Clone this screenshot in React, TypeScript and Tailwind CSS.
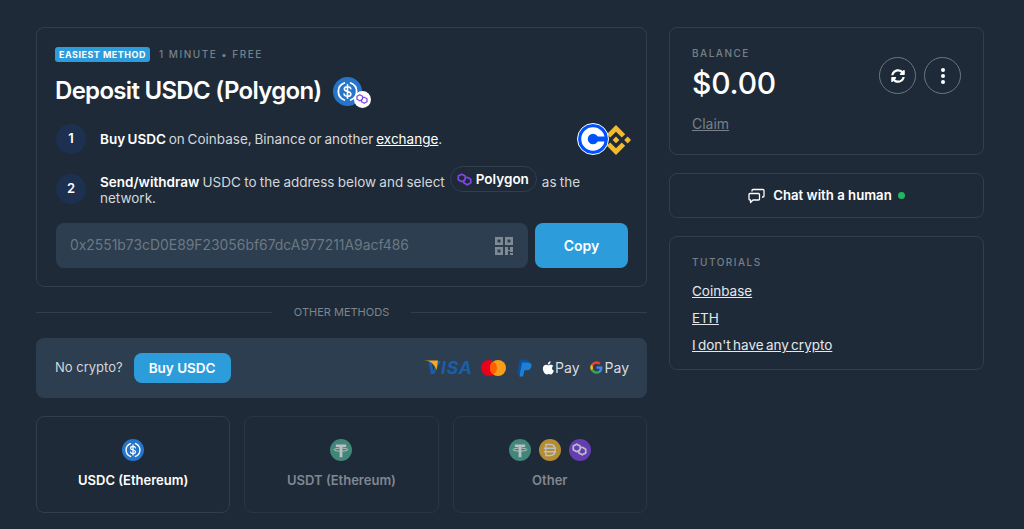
import React from 'react';
import { FaSyncAlt } from 'react-icons/fa';

const UsdcIcon = ({ size }: { size: number }) => (
  <svg width={size} height={size} viewBox="0 0 32 32" className="shrink-0">
    <circle cx="16" cy="16" r="16" fill="#2775ca" />
    <path d="M12.500 6.600a10 10 0 0 0 0 18.800M19.500 6.600a10 10 0 0 1 0 18.800" fill="none" stroke="#fff" strokeWidth="2" strokeLinecap="round" />
    <path d="M19.600 12.800c-.4-1.400-1.700-2.100-3.600-2.100-2 0-3.500 1-3.500 2.600 0 3.600 7.200 1.800 7.200 5.400 0 1.600-1.600 2.600-3.700 2.600-2 0-3.400-.9-3.800-2.400M16 8.600v14.800" fill="none" stroke="#fff" strokeWidth="1.800" strokeLinecap="round" />
  </svg>
);

const PolygonGlyph = ({ size, color }: { size: number; color: string }) => (
  <svg width={size} height={size} viewBox="0 0 24 24" fill="none" stroke={color} strokeWidth="2.600" strokeLinejoin="round" className="shrink-0">
    <path d="M7.500 3.500 13 6.500v6l-5.500 3L2 12.500v-6z" />
    <path d="M13 9.500l3.500-1 5.500 3v6l-5.500 3-5.500-3V14" />
  </svg>
);

const TetherIcon = () => (
  <svg width="22" height="22" viewBox="0 0 32 32" className="shrink-0">
    <circle cx="16" cy="16" r="16" fill="#50af95" />
    <path d="M8.500 8h15v3.500h-5.500v15h-4v-15H8.500z" fill="#fff" />
    <ellipse cx="16" cy="15.500" rx="10" ry="2.200" fill="none" stroke="#fff" strokeWidth="1.400" />
  </svg>
);

const DaiIcon = () => (
  <svg width="22" height="22" viewBox="0 0 32 32" className="shrink-0">
    <circle cx="16" cy="16" r="16" fill="#f4b731" />
    <path d="M10 8h6.500c4.500 0 7 3.400 7 8s-2.500 8-7 8H10zM7 13.500h18M7 18.500h18" fill="none" stroke="#fff" strokeWidth="2" />
  </svg>
);

const Step = ({ n, tight, children }: { n: number; tight?: boolean; children: React.ReactNode }) => (
  <div className="flex h-[30px] items-center gap-[14px]">
    <div className="flex h-[30px] w-[30px] shrink-0 items-center justify-center rounded-full bg-[#1e3050] text-[13px] font-semibold text-white">{n}</div>
    <div className={`text-[13.500px] leading-[16px] text-[#d3d7db] ${tight ? '[word-spacing:-1px]' : '[word-spacing:-0.500px]'}`}>{children}</div>
  </div>
);

const Method = ({ active, label, children }: { active?: boolean; label: string; children: React.ReactNode }) => (
  <div className={`flex h-[97px] flex-1 flex-col items-center justify-center gap-[10px] rounded-lg border ${active ? 'border-[#313e4d]' : 'border-[#283544]'}`}>
    <div className={`flex h-[22px] items-center gap-[8px] ${active ? '' : 'opacity-70'}`}>{children}</div>
    <div className={`text-[13px] font-semibold ${active ? 'text-white' : 'text-[#808790]'}`}>{label}</div>
  </div>
);

export default function App() {
  return (
    <div className="flex h-[529px] gap-[22px] overflow-hidden bg-[#1e2a38] pl-[36px] pt-[27px] font-['Inter',sans-serif] text-white">
      <div className="flex w-[611px] shrink-0 flex-col">
        <div className="flex h-[260px] flex-col rounded-lg border border-[#313e4d] pl-[19px] pr-[18px] pt-[19px]">
          <div className="-ml-[1px] flex items-center gap-[9px]">
            <span className="rounded-[3px] bg-[#2d9cdb] px-[4px] text-[9px] font-bold leading-[15px] tracking-[0.5px] text-white">EASIEST METHOD</span>
            <span className="text-[10px] font-medium tracking-[1.500px] text-[#77808a]">1 MINUTE • FREE</span>
          </div>
          <div className="-ml-[1px] mt-[11px] flex items-center gap-[11px]">
            <h1 className="text-[24px] font-semibold leading-[36px] tracking-[-0.7px]">Deposit USDC (Polygon)</h1>
            <div className="relative h-[29px] w-[29px]">
              <UsdcIcon size={29} />
              <div className="absolute -bottom-[2px] -right-[9px] flex h-[17px] w-[17px] items-center justify-center rounded-full bg-white">
                <PolygonGlyph size={12} color="#8247e5" />
              </div>
            </div>
          </div>
          <div className="relative mt-[15px] flex flex-col gap-[20px]">
            <Step n={1} tight>
              <b className="font-semibold text-white">Buy USDC</b> on Coinbase, Binance or another <span className="text-white underline">exchange</span>.
            </Step>
            <Step n={2}>
              <b className="font-semibold text-white">Send/withdraw</b> USDC to the address below and select
              <span className="-my-[6px] mx-[5px] inline-flex h-[26px] items-center gap-[4px] rounded-full border border-[#313e4d] pl-[6px] pr-[7px] align-baseline font-semibold text-white">
                <PolygonGlyph size={15} color="#8247e5" />
                Polygon
              </span>
              as the<br />network.
            </Step>
            <div className="absolute right-[-3px] -top-[1px] flex items-center">
              <svg width="32" height="32" viewBox="0 0 32 32" className="z-10">
                <circle cx="16" cy="16" r="15.500" fill="#0052ff" stroke="#fff" strokeWidth="1" />
                <circle cx="16" cy="16" r="8.500" fill="none" stroke="#fff" strokeWidth="6.500" />
                <path d="M16 13.500h13v5H16z" fill="#0052ff" />
              </svg>
              <svg width="30" height="30" viewBox="0 0 24 24" fill="#f3ba2f" className="-ml-[8px] mt-[2px]">
                <path d="M16.624 13.920l2.718 2.715-7.353 7.353-7.353-7.352 2.718-2.716 4.635 4.660 4.636-4.660zm4.637-4.637L24 12l-2.715 2.716L18.568 12l2.693-2.717zm-9.272.001l2.716 2.691-2.716 2.718L9.272 12l2.717-2.716zm-9.272-.001L5.409 12l-2.691 2.692L0 12l2.716-2.717zM11.989.012l7.353 7.329-2.717 2.715-4.636-4.636-4.635 4.660-2.718-2.716 7.353-7.352z" />
              </svg>
            </div>
          </div>
          <div className="mt-[19px] flex gap-[7px]">
            <div className="flex h-[45px] w-[472px] items-center justify-between rounded-lg bg-[#2c3e4f] pl-[14px] pr-[15px]">
              <span className="text-[13.900px] text-[#6c7884]">0x2551b73cD0E89F23056bf67dcA977211A9acf486</span>
              <svg width="18" height="18" viewBox="0 0 18 18" fill="#7f8a94">
                <path d="M0 0h8v8H0zm2.500 2.500v3h3v-3zM10 0h8v8h-8zm2.500 2.500v3h3v-3zM0 10h8v8H0zm2.500 2.500v3h3v-3zM10 10h3v3h2v-3h3v5h-3v-1h-2v4h-3zM15 16h3v2h-3z" fillRule="evenodd" />
              </svg>
            </div>
            <button className="h-[45px] w-[93px] rounded-lg bg-[#2d9cdb] text-[14px] font-semibold text-white">Copy</button>
          </div>
        </div>

        <div className="mt-[17px] flex h-[17px] items-center gap-[22px]">
          <div className="h-px flex-1 bg-[#313e4d]" />
          <span className="text-[11px] font-normal text-[#7d858e]">OTHER METHODS</span>
          <div className="h-px flex-1 bg-[#313e4d]" />
        </div>

        <div className="mt-[17px] flex h-[60px] items-center rounded-lg bg-[#2c3e4f] pl-[19px] pr-[18px]">
          <span className="text-[13px] text-[#d3d7db]">No crypto?</span>
          <button className="ml-[11px] h-[30px] w-[97px] rounded-lg bg-[#2d9cdb] text-[13.500px] font-semibold text-white">Buy USDC</button>
          <div className="ml-auto flex items-center gap-[10px]">
            <div className="relative h-[18px] w-[47px]">
              <span className="absolute left-[3px] top-0 text-[17.500px] font-bold italic leading-[18px] tracking-[0.8px] text-[#1a5ea8]">VISA</span>
              <svg width="14" height="14" viewBox="0 0 14 14" className="absolute left-0 top-[1px]">
                <path d="M0 .5C6 .5 10 3.500 12.500 10L14 .5z" fill="#f7a823" />
              </svg>
            </div>
            <svg width="25" height="16" viewBox="0 0 25 16">
              <circle cx="8" cy="8" r="8" fill="#eb001b" />
              <circle cx="17" cy="8" r="8" fill="#f79e1b" />
              <path d="M12.500 1.400a8 8 0 0 1 0 13.200 8 8 0 0 1 0-13.200z" fill="#ff5f00" />
            </svg>
            <svg width="15" height="18" viewBox="0 0 16 18" className="ml-[1px]">
              <path d="M3 0h6c3 0 4.500 1.500 4 4-.6 3-2.800 4.500-5.500 4.500H5.300L4 15H0z" fill="#0f4f9e" />
              <path d="M5.500 3h6c3 0 4.500 1.500 4 4-.6 3-2.800 4.500-5.500 4.500H7.800L6.500 18h-4z" fill="#1c80d6" />
            </svg>
            <div className="-mt-[1px] flex items-center gap-[1px] text-[14px] text-[#d8dce0]">
              <svg width="12" height="14" viewBox="0 0 14 16" fill="#fff">
                <path d="M10.100 0c.1 1.100-.3 2-.9 2.700-.6.700-1.500 1.200-2.400 1.100-.1-1 .4-2 .9-2.600C8.300.6 9.300.1 10.100 0zM13.400 5.400c-1 .6-1.700 1.500-1.700 2.800 0 1.500 1 2.400 2.100 2.900-.6 1.700-2 4.400-3.500 4.400-.8 0-1.300-.5-2.300-.5s-1.600.5-2.300.5C3.800 15.500 1 12 1 8.500c0-2.900 1.900-4.400 3.700-4.400 1 0 1.800.7 2.500.7.600 0 1.600-.7 2.700-.7 1.100 0 2.700.3 3.500 1.800z" />
              </svg>
              Pay
            </div>
            <div className="-mt-[1px] flex items-center gap-[2px] text-[14px] text-[#d8dce0]">
              <svg width="13" height="13" viewBox="0 0 24 24">
                <path d="M23 12.300c0-.8-.1-1.600-.2-2.300H12v4.400h6.200a5.300 5.300 0 0 1-2.300 3.500v2.900h3.700c2.200-2 3.400-5 3.400-8.500z" fill="#4285f4" />
                <path d="M12 23.500c3.100 0 5.700-1 7.600-2.800l-3.700-2.900c-1 .7-2.300 1.100-3.900 1.100-3 0-5.500-2-6.400-4.800H1.800v3A11.500 11.500 0 0 0 12 23.500z" fill="#34a853" />
                <path d="M5.600 14.100a6.900 6.900 0 0 1 0-4.300v-3H1.800a11.500 11.500 0 0 0 0 10.300z" fill="#fbbc05" />
                <path d="M12 5c1.700 0 3.200.6 4.400 1.700l3.300-3.300A11.500 11.500 0 0 0 1.800 6.800l3.800 3C6.500 7 9 5 12 5z" fill="#ea4335" />
              </svg>
              Pay
            </div>
          </div>
        </div>

        <div className="mt-[18px] flex gap-[14px]">
          <Method active label="USDC (Ethereum)"><UsdcIcon size={22} /></Method>
          <Method label="USDT (Ethereum)"><TetherIcon /></Method>
          <Method label="Other">
            <TetherIcon />
            <DaiIcon />
            <div className="flex h-[22px] w-[22px] items-center justify-center rounded-full bg-[#8247e5]">
              <PolygonGlyph size={15} color="#fff" />
            </div>
          </Method>
        </div>
      </div>

      <div className="flex w-[315px] shrink-0 flex-col">
        <div className="relative h-[128px] rounded-lg border border-[#313e4d] px-[22px] pt-[19px]">
          <div className="text-[10px] font-medium leading-[12px] tracking-[1.500px] text-[#77808a]">BALANCE</div>
          <div className="mt-[4px] text-[30px] font-medium leading-[40px] tracking-[-0.2px]">$0.00</div>
          <div className="mt-[12px] text-[14px] leading-[18px] text-[#77808a] underline">Claim</div>
          <div className="absolute right-[22px] top-[29px] flex gap-[8px]">
            <div className="flex h-[37px] w-[37px] items-center justify-center rounded-full border border-[#6d7680]">
              <FaSyncAlt size={14} color="#fff" />
            </div>
            <div className="flex h-[37px] w-[37px] flex-col items-center justify-center gap-[2px] rounded-full border border-[#6d7680]">
              <span className="h-[4px] w-[4px] rounded-full bg-white" />
              <span className="h-[4px] w-[4px] rounded-full bg-white" />
              <span className="h-[4px] w-[4px] rounded-full bg-white" />
            </div>
          </div>
        </div>

        <div className="mt-[18px] flex h-[45px] items-center justify-center gap-[8px] rounded-lg border border-[#313e4d]">
          <svg width="17" height="16" viewBox="0 0 17 16" fill="none" stroke="#fff" strokeWidth="1.300" strokeLinejoin="round">
            <path d="M2 5.500h8.500a1 1 0 0 1 1 1V11a1 1 0 0 1-1 1H5l-2.500 2.500V12H2a1 1 0 0 1-1-1V6.500a1 1 0 0 1 1-1z" />
            <path d="M4 3.500V2.500a1 1 0 0 1 1-1h10a1 1 0 0 1 1 1V8a1 1 0 0 1-1 1h-1" />
          </svg>
          <span className="text-[13.200px] font-semibold">Chat with a human</span>
          <span className="-ml-[2px] h-[7px] w-[7px] rounded-full bg-[#22b860]" />
        </div>

        <div className="mt-[18px] flex h-[134px] flex-col rounded-lg border border-[#313e4d] px-[22px] pt-[19px]">
          <div className="text-[10px] font-medium leading-[12px] tracking-[1.500px] text-[#77808a]">TUTORIALS</div>
          <div className="mt-[14px] flex flex-col gap-[9px] text-[13.500px] leading-[18px] text-[#e5e7eb] underline [word-spacing:-1.500px]">
            <span>Coinbase</span>
            <span>ETH</span>
            <span>I don't have any crypto</span>
          </div>
        </div>
      </div>
    </div>
  );
}
